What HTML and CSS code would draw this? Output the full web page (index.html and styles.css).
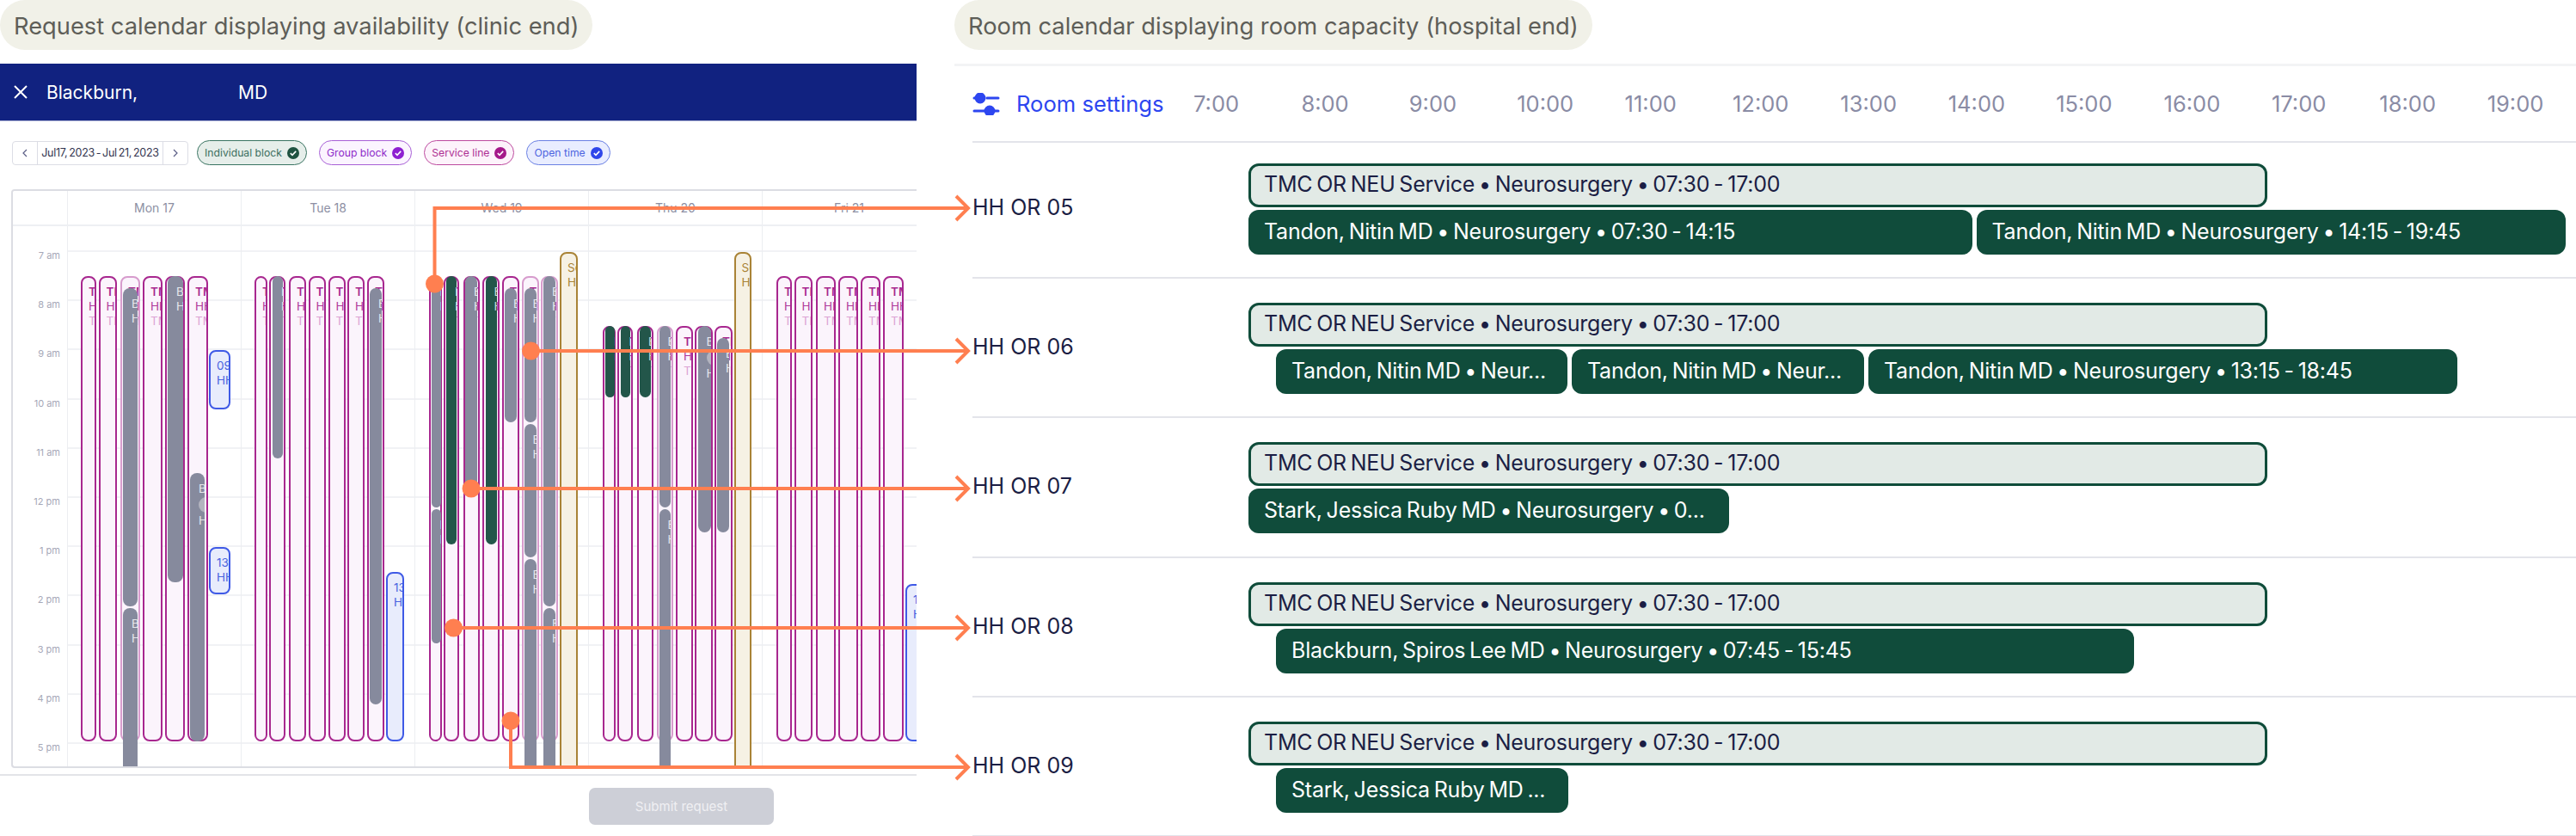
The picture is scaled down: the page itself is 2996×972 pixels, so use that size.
FILE: index.html
```html
<!DOCTYPE html>
<html lang="en">
<head>
  <meta charset="UTF-8" />
  <meta name="viewport" content="width=device-width, initial-scale=1.0"/>
  <title>Request and room calendars</title>
  <link rel="stylesheet" href="styles.css">
</head>
<body>
  <div class="page">
    <section class="clinic">
      <h2 class="pill">Request calendar displaying availability (clinic end)</h2>

      <div class="navbar">
        <svg class="close-icon" viewBox="0 0 16 16"><path d="M1 1 15 15M15 1 1 15"/></svg>
        <span>Blackburn,</span>
        <span class="navbar-md">MD</span>
      </div>

      <div class="toolbar">
        <div class="date-nav">
          <span class="date-arrow"><svg viewBox="0 0 6 10"><path d="M5 1 1 5l4 4"/></svg></span>
          <span class="date-range">Jul17, 2023 - Jul 21, 2023</span>
          <span class="date-arrow"><svg viewBox="0 0 6 10"><path d="M1 1l4 4-4 4"/></svg></span>
        </div>
        <span class="chip chip-individual">Individual block <svg viewBox="0 0 14 14"><circle cx="7" cy="7" r="7"/><path d="M3.8 7.2 6 9.3l4.2-4.4"/></svg></span>
        <span class="chip chip-group">Group block <svg viewBox="0 0 14 14"><circle cx="7" cy="7" r="7"/><path d="M3.8 7.2 6 9.3l4.2-4.4"/></svg></span>
        <span class="chip chip-service">Service line <svg viewBox="0 0 14 14"><circle cx="7" cy="7" r="7"/><path d="M3.8 7.2 6 9.3l4.2-4.4"/></svg></span>
        <span class="chip chip-open">Open time <svg viewBox="0 0 14 14"><circle cx="7" cy="7" r="7"/><path d="M3.8 7.2 6 9.3l4.2-4.4"/></svg></span>
      </div>

      <div class="calendar">
        <div class="cal-head">
          <div class="cal-corner"></div>
          <div class="cal-day">Mon 17</div>
          <div class="cal-day">Tue 18</div>
          <div class="cal-day">Wed 19</div>
          <div class="cal-day">Thu 20</div>
          <div class="cal-day">Fri 21</div>
        </div>
        <div class="cal-body" id="calBody"></div>
        <div class="cal-events" id="calEvents"></div>
      </div>

      <div class="submit-bar">
        <button class="submit-btn">Submit request</button>
      </div>
    </section>

    <section class="hospital">
      <h2 class="pill">Room calendar displaying room capacity (hospital end)</h2>
      <div class="room-head">
        <div class="room-settings">
          <svg viewBox="0 0 32 26"><circle cx="9" cy="6" r="5"/><circle cx="20" cy="21" r="5"/><path d="M2 6h3M17 6h13M2 21h12M25 21h5"/></svg>
          Room settings
        </div>
        <div class="hours" id="hours"></div>
      </div>
      <div id="rooms"></div>
    </section>
  </div>

  <!-- Lines from the request calendar to the rooms -->
  <svg class="links" viewBox="0 0 2996 972">
    <path d="M505.5 330V242H1126"/>
    <path d="M617.5 408H1126"/>
    <path d="M548 568H1126"/>
    <path d="M527.5 730H1126"/>
    <path d="M594 838V892H1126"/>
    <path d="M1112 228l14 14-14 14M1112 394l14 14-14 14M1112 554l14 14-14 14M1112 716l14 14-14 14M1112 878l14 14-14 14"/>
    <circle cx="505.5" cy="330" r="10.5"/>
    <circle cx="617.5" cy="408" r="10.5"/>
    <circle cx="548" cy="568" r="10.5"/>
    <circle cx="527.5" cy="730" r="10.5"/>
    <circle cx="594" cy="838" r="10.5"/>
  </svg>

  <script>
    // kind, left, right, top, bottom (page pixels)
    const MAG = 321, MAG_END = 862, CLIP = 900;
    const events = [
      // Mon
      ['line', 94, 112, MAG, MAG_END], ['line', 114.5, 136, MAG, MAG_END], ['line pale', 140, 163, MAG, MAG_END],
      ['line', 166, 189, MAG, MAG_END], ['line', 192, 215, MAG, MAG_END], ['line', 218, 242, MAG, MAG_END],
      ['grey', 143, 160, 335, 705], ['grey', 143, 160, 707, CLIP], ['grey', 195, 212.5, MAG, 677],
      ['grey avatar', 221, 238, 550, 862],
      ['open', 243, 267.5, 407, 476, '09:00', 'HH OR 06'], ['open', 243, 267.5, 636, 691, '13:30', 'HH OR 06'],
      // Tue
      ['line', 296, 311, MAG, MAG_END], ['line', 313, 332, MAG, MAG_END], ['line', 336, 356, MAG, MAG_END],
      ['line', 358.5, 378.5, MAG, MAG_END], ['line', 381.5, 401.5, MAG, MAG_END], ['line', 404, 424, MAG, MAG_END],
      ['line', 427, 447, MAG, MAG_END],
      ['grey', 317, 328.5, MAG, 533], ['grey', 430, 444, 335, 819],
      ['open', 449, 470, 665, 862, '13:30', 'HH OR 06'],
      // Wed
      ['line', 498.5, 514, MAG, MAG_END], ['line', 516, 534, MAG, MAG_END], ['line', 538.5, 557.5, MAG, MAG_END],
      ['line', 561, 580.5, MAG, MAG_END], ['line', 583.5, 603.5, MAG, MAG_END], ['line pale', 606.5, 626.5, MAG, MAG_END],
      ['line pale', 629, 649, MAG, MAG_END],
      ['gold', 651, 672, 293, CLIP],
      ['grey', 501.5, 512.5, MAG, 590], ['grey', 501.5, 512.5, 592, 748],
      ['green', 519, 531, MAG, 633], ['grey', 541, 554.5, MAG, 567], ['green', 564.5, 577.5, MAG, 633],
      ['grey', 587, 601, 335, 490.5], ['grey', 609.5, 624, 335, 490.5], ['grey', 609.5, 624, 493, 648],
      ['grey', 609.5, 624, 650, CLIP], ['grey', 632, 646, MAG, 705], ['grey', 632, 646, 707, CLIP],
      // Thu
      ['line', 700.5, 716, 378.5, MAG_END], ['line', 718, 736, 378.5, MAG_END], ['line', 740.5, 759.5, 378.5, MAG_END],
      ['line pale', 763.5, 783, 378.5, MAG_END], ['line', 786, 806, 378.5, MAG_END], ['line', 808, 829, 378.5, MAG_END],
      ['line', 831, 851.5, 378.5, MAG_END],
      ['gold', 853.5, 874, 293, CLIP],
      ['green', 704, 715, 378.5, 462], ['green', 721.5, 733, 378.5, 462], ['green', 744, 757, 378.5, 462],
      ['grey', 766.5, 780, 378.5, 590], ['grey', 766.5, 780, 592, CLIP],
      ['grey avatar', 811.5, 826.5, 378.5, 619], ['grey', 834, 848, 392.5, 619],
      // Fri
      ['line', 903, 920.5, MAG, MAG_END], ['line', 923.5, 945, MAG, MAG_END], ['line', 949, 972, MAG, MAG_END],
      ['line', 975, 997.5, MAG, MAG_END], ['line', 1001, 1024, MAG, MAG_END], ['line', 1027, 1050.5, MAG, MAG_END],
      ['open', 1053, 1080, 679, 862, '13:30', 'HH OR 06']
    ];

    // the event layer sits inside the calendar's border
    const ORIGIN_X = 15, ORIGIN_Y = 222;

    function blockLines(ev) {
      const kind = ev[0];
      if (kind.startsWith('line')) return ['TMC OR NEU', 'HH OR 05', 'TMC OR'];
      if (kind.startsWith('grey') || kind === 'green') return ['Blackburn', 'HH OR 07'];
      if (kind === 'gold') return ['Service', 'HH OR 05'];
      return [ev[5], ev[6]];
    }

    const layer = document.getElementById('calEvents');
    events.forEach(ev => {
      const el = document.createElement('div');
      el.className = 'event ' + ev[0];
      el.style.left = (ev[1] - ORIGIN_X) + 'px';
      el.style.width = (ev[2] - ev[1]) + 'px';
      el.style.top = (ev[3] - ORIGIN_Y) + 'px';
      el.style.height = (ev[4] - ev[3]) + 'px';
      blockLines(ev).forEach((text, i) => {
        if (i === 1 && ev[0].includes('avatar')) {
          const dot = document.createElement('i');
          dot.className = 'avatar-dot';
          el.appendChild(dot);
        }
        const line = document.createElement('div');
        line.textContent = text;
        el.appendChild(line);
      });
      layer.appendChild(el);
    });

    // grid behind the events
    const calBody = document.getElementById('calBody');
    const timeCol = document.createElement('div');
    timeCol.className = 'time-col';
    ['7 am', '8 am', '9 am', '10 am', '11 am', '12 pm', '1 pm', '2 pm', '3 pm', '4 pm', '5 pm'].forEach(t => {
      const label = document.createElement('div');
      label.className = 'time-label';
      label.textContent = t;
      timeCol.appendChild(label);
    });
    calBody.appendChild(timeCol);
    for (let d = 0; d < 5; d++) {
      const col = document.createElement('div');
      col.className = 'day-col';
      for (let h = 0; h < 11; h++) {
        const cell = document.createElement('div');
        cell.className = 'hour-cell';
        col.appendChild(cell);
      }
      calBody.appendChild(col);
    }

    // room calendar
    const hours = document.getElementById('hours');
    for (let h = 7; h <= 19; h++) {
      const span = document.createElement('span');
      span.textContent = h + ':00';
      hours.appendChild(span);
    }

    const rooms = [
      { name: 'HH OR 05', offset: 0, bars: [
        ['Tandon, Nitin MD • Neurosurgery • 07:30 - 14:15', 841.5],
        ['Tandon, Nitin MD • Neurosurgery • 14:15 - 19:45', 685.5]] },
      { name: 'HH OR 06', offset: 32, bars: [
        ['Tandon, Nitin MD • Neur...', 339],
        ['Tandon, Nitin MD • Neur...', 340],
        ['Tandon, Nitin MD • Neurosurgery • 13:15 - 18:45', 685]] },
      { name: 'HH OR 07', offset: 0, bars: [
        ['Stark, Jessica Ruby MD • Neurosurgery • 0...', 559]] },
      { name: 'HH OR 08', offset: 32, bars: [
        ['Blackburn, Spiros Lee MD • Neurosurgery • 07:45 - 15:45', 998]] },
      { name: 'HH OR 09', offset: 32, bars: [
        ['Stark, Jessica Ruby MD ...', 340]] }
    ];

    const roomList = document.getElementById('rooms');
    rooms.forEach(room => {
      const row = document.createElement('div');
      row.className = 'room-row';
      const name = document.createElement('div');
      name.className = 'room-name';
      name.textContent = room.name;
      row.appendChild(name);

      const track = document.createElement('div');
      track.className = 'room-track';
      const service = document.createElement('div');
      service.className = 'bar bar-service';
      service.textContent = 'TMC OR NEU Service • Neurosurgery • 07:30 - 17:00';
      track.appendChild(service);

      const lane = document.createElement('div');
      lane.className = 'lane';
      lane.style.paddingLeft = room.offset + 'px';
      room.bars.forEach(b => {
        const bar = document.createElement('div');
        bar.className = 'bar bar-person';
        bar.style.width = b[1] + 'px';
        bar.textContent = b[0];
        lane.appendChild(bar);
      });
      track.appendChild(lane);
      row.appendChild(track);
      roomList.appendChild(row);
    });
  </script>
</body>
</html>
```

FILE: styles.css
```css
* {
  box-sizing: border-box;
}

body {
  font-family: Inter, "Liberation Sans", sans-serif;
  margin: 0;
  background-color: #fff;
  position: relative;
  width: 2996px;
  height: 972px;
  overflow: hidden;
}

.page {
  display: flex;
  gap: 44px;
}

.clinic {
  width: 1066px;
  flex: none;
}

.hospital {
  flex: 1;
}

.pill {
  display: inline-block;
  height: 58px;
  line-height: 62px;
  margin: 0;
  padding: 0 16px;
  border-radius: 29px;
  background-color: #f1f1e8;
  color: #5e5e58;
  font-size: 27.3px;
  font-weight: 400;
  white-space: nowrap;
  vertical-align: top;
}

/* clinic side */

.navbar {
  margin-top: 16px;
  height: 67px;
  padding-left: 16px;
  display: flex;
  align-items: center;
  background-color: #112280;
  border-bottom: 1px solid #aab0d4;
  color: #fff;
  font-size: 21px;
}

.close-icon {
  width: 16px;
  height: 16px;
  margin-right: 22px;
  fill: none;
  stroke: #fff;
  stroke-width: 2;
}

.navbar-md {
  margin-left: 117px;
}

.toolbar {
  margin: 22px 0 28px 14px;
  height: 29px;
  display: flex;
  align-items: center;
  gap: 14px;
}

.date-nav {
  width: 205px;
  height: 28px;
  display: flex;
  align-items: center;
  margin-right: -4px;
  border: 1px solid #dcdde5;
  border-radius: 4px;
  font-size: 12.5px;
  color: #33354f;
  letter-spacing: -0.25px;
  word-spacing: -1.5px;
}

.date-arrow {
  width: 28px;
  height: 100%;
  flex: none;
  display: flex;
  align-items: center;
  justify-content: center;
}

.date-arrow svg {
  width: 6px;
  height: 10px;
  fill: none;
  stroke: #5b5e86;
  stroke-width: 1.2;
}

.date-range {
  flex: 1;
  height: 100%;
  line-height: 26px;
  text-align: center;
  white-space: nowrap;
  border-left: 1px solid #dcdde5;
  border-right: 1px solid #dcdde5;
}

.chip {
  height: 29px;
  padding: 0 8px;
  display: flex;
  align-items: center;
  gap: 6px;
  border: 1.5px solid;
  border-radius: 15px;
  font-size: 12.2px;
  white-space: nowrap;
}

.chip svg {
  width: 14px;
  height: 14px;
}

.chip svg path {
  fill: none;
  stroke: #fff;
  stroke-width: 1.6;
}

.chip-individual {
  color: #3d6f5e;
  background-color: #e6eeea;
  border-color: #3a7462;
}

.chip-individual svg circle {
  fill: #1f5341;
}

.chip-group {
  color: #8e2bc9;
  background-color: #fbf4ff;
  border-color: #a860d6;
}

.chip-group svg circle {
  fill: #8e1fd1;
}

.chip-service {
  color: #ae2f93;
  background-color: #fdf3fb;
  border-color: #bd4a9f;
}

.chip-service svg circle {
  fill: #a5198a;
}

.chip-open {
  color: #4b63e0;
  background-color: #e9edff;
  border-color: #6a80e3;
}

.chip-open svg circle {
  fill: #2f46ea;
}

/* calendar */

.calendar {
  position: relative;
  margin-left: 13px;
  height: 673px;
  overflow: hidden;
  border: 2px solid #dcdde3;
  border-right: 0;
  border-radius: 4px 0 0 4px;
}

.cal-head {
  display: grid;
  grid-template-columns: 64px repeat(5, 202px);
  height: 41px;
  border-bottom: 2px solid #eef0f3;
  width: 1074px;
}

.cal-corner {
  border-right: 1px solid #eceef1;
  background-color: #fff;
}

.cal-day {
  line-height: 39px;
  text-align: center;
  font-size: 14px;
  color: #8d8fa3;
  border-right: 1px solid #eceef1;
}

.cal-body {
  display: grid;
  grid-template-columns: 64px repeat(5, 202px);
  width: 1074px;
}

.time-col {
  padding-top: 29px;
  padding-right: 8px;
  border-right: 1px solid #eceef1;
}

.time-label {
  height: 57.2px;
  line-height: 10px;
  text-align: right;
  font-size: 11px;
  color: #a6a8b8;
}

.day-col {
  border-right: 1px solid #eceef1;
  padding-top: 28px;
}

.hour-cell {
  height: 57.2px;
  border-top: 2px solid #f1f2f5;
}

.cal-events {
  position: absolute;
  inset: 0;
}

.event {
  position: absolute;
  overflow: hidden;
  border-radius: 8px;
  padding: 10px 0 0 9px;
  font-size: 13.5px;
  line-height: 17px;
  white-space: nowrap;
}

.event.line {
  background-color: #fbf4fc;
  border: 2px solid #a8278f;
  padding-left: 7px;
  padding-top: 8px;
  color: #b0399a;
}

.event.line div:first-child {
  font-weight: 600;
  color: #a8278f;
}

.event.line div:last-child {
  color: #dca3d4;
}

.event.line.pale {
  border-color: #d79ccd;
}

.event.grey {
  background-color: #868a9d;
  color: #e6e7ec;
  padding-left: 10px;
}

.event.green {
  background-color: #23564a;
  color: #cfdcd7;
  padding-left: 10px;
}

.event.open {
  background-color: #e8ecfc;
  border: 2px solid #3f5ae6;
  color: #4a63e0;
  padding-left: 7px;
  padding-top: 8px;
}

.event.gold {
  background-color: #f6f1e4;
  border: 2px solid #a98336;
  color: #a98336;
  padding-left: 7px;
  padding-top: 8px;
}

.avatar-dot {
  display: block;
  width: 18px;
  height: 18px;
  margin: 1px 0;
  border-radius: 50%;
  background-color: #b3b4bf;
}

.submit-bar {
  margin-top: 7px;
  padding-top: 14px;
  padding-right: 166px;
  border-top: 2px solid #e3e4e8;
  display: flex;
  justify-content: flex-end;
}

.submit-btn {
  width: 215px;
  height: 43px;
  border: 0;
  border-radius: 7px;
  background-color: #cdcfd7;
  color: #f0f0f3;
  font-family: inherit;
  font-size: 15px;
}

/* hospital side */

.room-head {
  margin-top: 16px;
  height: 90px;
  padding-left: 21px;
  display: flex;
  align-items: center;
  border-top: 3px solid #f3f4f5;
}

.room-settings {
  width: 257px;
  flex: none;
  display: flex;
  align-items: center;
  gap: 19px;
  color: #2d46f0;
  font-size: 25.6px;
}

.room-settings svg {
  width: 32px;
  height: 26px;
  flex: none;
  fill: #2d46f0;
  stroke: #2d46f0;
  stroke-width: 3;
  stroke-linecap: round;
}

.hours {
  display: flex;
}

.hours span {
  width: 125.4px;
  font-size: 25.5px;
  color: #8a8ca5;
}

.room-row {
  margin-left: 21px;
  height: 162.3px;
  padding-top: 28px;
  display: flex;
  align-items: flex-start;
  border-top: 2px solid #e3e4ea;
}

.room-row:first-child {
  height: 158px;
  padding-top: 24px;
}

.room-row:last-child {
  height: 164px;
  border-bottom: 2px solid #e3e4ea;
}

.room-name {
  width: 321px;
  flex: none;
  height: 106px;
  line-height: 102px;
  font-size: 25px;
  color: #1b1e44;
}

.room-track {
  flex: 1;
  display: flex;
  flex-direction: column;
  gap: 3px;
}

.lane {
  display: flex;
  gap: 5px;
}

.bar {
  height: 52px;
  line-height: 51px;
  padding-left: 18px;
  border-radius: 12px;
  font-size: 25px;
  letter-spacing: -0.22px;
  word-spacing: -2px;
  white-space: nowrap;
  overflow: hidden;
}

.bar-service {
  width: 1185px;
  height: 51px;
  background-color: #e2eae6;
  border: 3px solid #0f4c3a;
  padding-left: 15px;
  line-height: 43px;
  color: #1b1e44;
}

.bar-person {
  background-color: #104c3b;
  color: #fff;
}

/* connector overlay */

.links {
  position: absolute;
  left: 0;
  top: 0;
  width: 2996px;
  height: 972px;
  pointer-events: none;
}

.links path {
  fill: none;
  stroke: #ff7f50;
  stroke-width: 4;
}

.links circle {
  fill: #ff7f50;
}
```
